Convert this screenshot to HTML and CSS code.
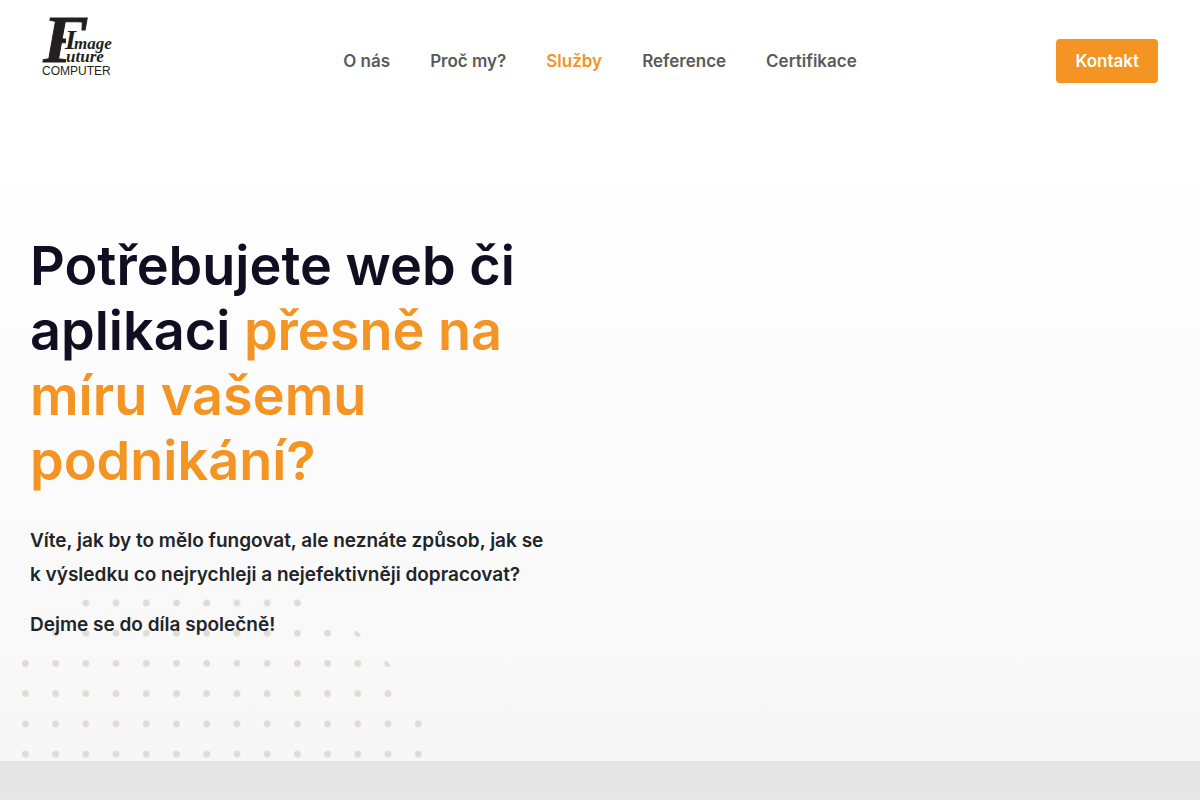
FILE: index.html
```html
<!doctype html>
<html lang="cs">
<head>
	<meta charset="utf-8">
	<meta name="viewport" content="width=device-width, initial-scale=1">
	<title>Image Future Computer</title>
	<link rel="stylesheet" href="styles.css">
</head>

<body>
	<div class="hero">
		<svg class="dots" width="460" height="162" viewBox="0 0 460 162" aria-hidden="true">
			<defs>
				<pattern id="dot" x="10.3" y="-11.1" width="30.22" height="30.22" patternUnits="userSpaceOnUse">
					<circle cx="15.1" cy="15.1" r="3.4" fill="#dfdcd7"/>
				</pattern>
				<clipPath id="round">
					<circle cx="197" cy="223" r="249"/>
				</clipPath>
			</defs>
			<rect x="10.3" width="449" height="162" fill="url(#dot)" clip-path="url(#round)"/>
		</svg>

		<header class="header">
			<a class="logo" href="#" aria-label="Image Future Computer">
				<svg width="68" height="62" viewBox="0 0 68 62">
					<defs>
						<clipPath id="f-arm">
							<path d="M-4 -4H50V17H24V50H-4z"/>
						</clipPath>
					</defs>
					<text class="logo-f" x="1" y="46" clip-path="url(#f-arm)">F</text>
					<text class="logo-i" x="23" y="33">I</text>
					<text class="logo-word" x="32" y="33">mage</text>
					<text class="logo-word" x="24" y="46">uture</text>
					<text class="logo-computer" x="0" y="59">COMPUTER</text>
				</svg>
			</a>
			<nav class="nav">
				<a href="#">O nás</a>
				<a href="#">Proč my?</a>
				<a class="active" href="#">Služby</a>
				<a href="#">Reference</a>
				<a href="#">Certifikace</a>
			</nav>
			<a class="button" href="#">Kontakt</a>
		</header>

		<main class="intro">
			<h1>Potřebujete web či aplikaci <span>přesně na míru vašemu podnikání?</span></h1>
			<p>Víte, jak by to mělo fungovat, ale neznáte způsob, jak se k&nbsp;výsledku co nejrychleji a nejefektivněji dopracovat?</p>
			<p>Dejme se do díla společně!</p>
		</main>
	</div>

	<section class="next"></section>
</body>
</html>
```
FILE: styles.css
```css
* {box-sizing: border-box}

body {
	display: flex;
	flex-direction: column;
	min-height: 100vh;
	margin: 0;
	font-family: Inter, "Liberation Sans", sans-serif;
	color: #212529;
}

a {text-decoration: none}

.hero {
	position: relative;
	padding-bottom: 119px;
	background: linear-gradient(#fff 20%, #f7f7f7);
	overflow: hidden;
}

.dots {
	position: absolute;
	left: 0;
	bottom: 0;
}

.header {
	display: grid;
	grid-template-columns: 1fr auto 1fr;
	align-items: center;
	padding: 16px 42px 15px;
}

.logo {
	align-self: start;
	justify-self: start;
	color: #231f20;

	& svg {
		display: block;
		fill: currentColor;
		overflow: visible;
	}
}

.logo-f, .logo-i, .logo-word {
	font-family: "Liberation Serif", serif;
	font-style: italic;
	font-weight: 700;
}

.logo-f {
	font-size: 68px;
	stroke: currentColor;
	stroke-width: 1px;
}

.logo-i {font-size: 28px}
.logo-word {font-size: 17px}

.logo-computer {
	font-family: "Liberation Sans", sans-serif;
	font-size: 12px;
}

.nav {
	display: flex;
	gap: 40px;
	padding: 30px 0;

	& a {
		font-size: 17px;
		font-weight: 600;
		line-height: 30px;
		color: #5a5a5a;
	}

	& .active {color: #f49422}
}

.button {
	justify-self: end;
	padding: 10px 19px;
	border-radius: 4px;
	background: #f49422;
	color: #fff;
	font-size: 17px;
	font-weight: 600;
	line-height: 24px;
}

.intro {
	position: relative;
	max-width: 580px;
	padding: 112px 30px 0;

	& h1 {
		margin: 0 0 31px;
		font-size: 54px;
		font-weight: 600;
		line-height: 65px;
		color: #100e20;
	}

	& h1 span {color: #f49422}

	& p {
		margin: 0 0 16px;
		font-size: 19px;
		font-weight: 600;
		line-height: 34px;
	}

	& p:last-child {margin: 0}
}

.next {
	flex-grow: 1;
	background: linear-gradient(#e4e4e4, #e7e7e7);
}
```
